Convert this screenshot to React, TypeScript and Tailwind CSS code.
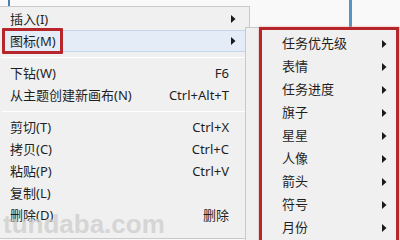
import React from "react";

type Item = { label: string; shortcut?: string; sub?: boolean; active?: boolean } | "sep";

const mainItems: Item[] = [
  { label: "插入(I)", sub: true },
  { label: "图标(M)", sub: true, active: true },
  "sep",
  { label: "下钻(W)", shortcut: "F6" },
  { label: "从主题创建新画布(N)", shortcut: "Ctrl+Alt+T" },
  "sep",
  { label: "剪切(T)", shortcut: "Ctrl+X" },
  { label: "拷贝(C)", shortcut: "Ctrl+C" },
  { label: "粘贴(P)", shortcut: "Ctrl+V" },
  { label: "复制(L)" },
  { label: "删除(D)", shortcut: "删除" },
];

const subItems = ["任务优先级", "表情", "任务进度", "旗子", "星星", "人像", "箭头", "符号", "月份"];

function Arrow() {
  return (
    <svg width="5" height="8" viewBox="0 0 5 8" className="shrink-0">
      <path d="M0 0 L4.5 4 L0 8 Z" fill="#1a1a1a" />
    </svg>
  );
}

export default function App() {
  return (
    <div
      className="relative w-[400px] h-[240px] overflow-hidden bg-[#f9f9f9] text-[13px] text-[#1f1f1f]"
      style={{ fontFamily: '"Noto Sans", "Noto Sans CJK SC", sans-serif' }}
    >
      {/* background window bits */}
      <div className="absolute left-[8px] top-0 w-[2px] h-[6px] bg-[#4a7fb0]" />
      <div className="absolute left-[349px] top-0 w-[3px] h-[28px] bg-[#5a93c0]" />

      {/* main context menu */}
      <div className="mt-[6px] w-[250px] h-[233px] bg-[#f0f0f0] border-r border-b border-t border-[#c9c9c9] pt-[1px]">
        {mainItems.map((it, i) =>
          it === "sep" ? (
            <div key={i} className="h-[10px] flex items-center px-[2px]">
              <div className="w-full h-px bg-[#d7d7d7] border-b border-white" />
            </div>
          ) : (
            <div
              key={i}
              className={`relative h-[22px] mx-[2px] flex items-center pl-[8px] pr-[11px] ${
                it.active ? "bg-[#e3ecf7] border-y border-[#c4d6ec]" : ""
              }`}
            >
              <span className="flex-1 leading-none">{it.label}</span>
              {it.shortcut && <span className="pr-[7px] leading-none">{it.shortcut}</span>}
              {it.sub && <Arrow />}
              {it.active && (
                <div className="absolute left-0 top-[-3px] w-[61px] h-[26px] border-[3px] border-[#b7262b] rounded-[1px]" />
              )}
            </div>
          )
        )}
      </div>

      {/* submenu */}
      <div className="absolute left-[245px] top-[27px] w-[160px] h-[220px] bg-[#f0f0f0] border border-[#c9c9c9] pt-[4px]">
        {subItems.map((s) => (
          <div key={s} className="h-[23px] flex items-center pl-[36px] pr-[17px]">
            <span className="flex-1 leading-none">{s}</span>
            <Arrow />
          </div>
        ))}
      </div>
      <div className="absolute left-[259px] top-[27px] w-[140px] h-[220px] border-[3px] border-[#b7262b] shadow-[0_0_2px_#e8a0a0]" />

      {/* watermark */}
      <div
        className="absolute left-[3px] top-[205px] text-[26px] font-bold text-[#cccccc]/75 pointer-events-none"
        style={{ fontFamily: '"Liberation Sans", sans-serif' }}
      >
        tundaba.com
      </div>
    </div>
  );
}
